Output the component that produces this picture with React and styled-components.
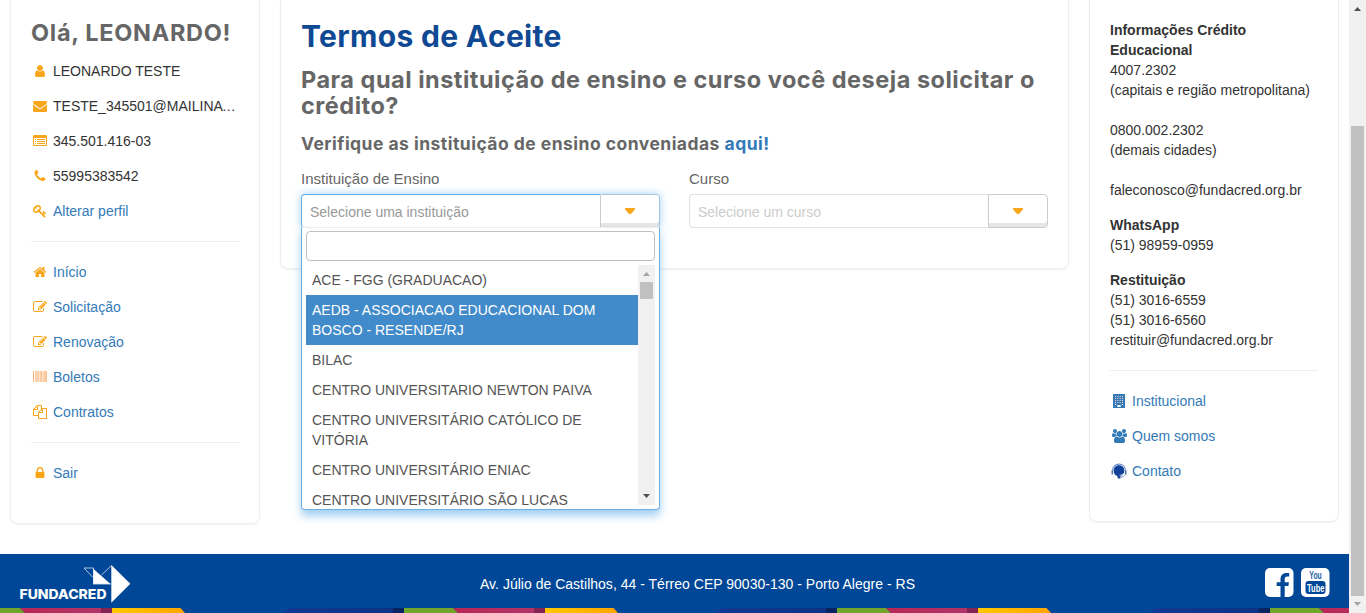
import React from 'react';
import styled, { createGlobalStyle, css } from 'styled-components';

const GlobalStyle = createGlobalStyle`
  *, *::before, *::after { box-sizing: border-box; }
  html, body { margin: 0; height: 100%; overflow: hidden; }
  body {
    background: #fff;
    color: #333;
    font: 14px/20px "Liberation Sans", Arial, sans-serif;
  }
`;

const headingFont = css`
  font-family: Inter, "Open Sans", sans-serif;
  font-weight: 700;
  margin: 0;
  white-space: nowrap;
`;

const Window = styled.div`
  display: flex;
  width: 1366px;
  height: 613px;
  overflow: hidden;
`;

const Page = styled.div`
  display: flex;
  flex-direction: column;
  width: 1349px;
  height: 613px;
`;

const Columns = styled.main`
  display: grid;
  grid-template-columns: 250px 789px 250px;
  column-gap: 20px;
  align-items: start;
  padding-left: 10px;
  height: 554px;
`;

const Card = styled.section`
  height: ${(p) => p.$height}px;
  padding: 20px 20px 0;
  border: 1px solid #eee;
  border-top: 0;
  border-radius: 0 0 8px 8px;
  box-shadow: 0 1px 2px rgba(0, 0, 0, 0.06);
`;

const Greeting = styled.h3`
  ${headingFont}
  color: #666;
  font-size: 23.5px;
  line-height: 26px;
  letter-spacing: ${(p) => p.$spacing}px;
  margin-bottom: 15px;
`;

const Menu = styled.ul`
  display: flex;
  flex-direction: column;
  gap: 15px;
  margin: 0;
  padding: 0;
  list-style: none;
`;

const MenuItem = styled.li`
  display: flex;
  align-items: center;
  gap: 4px;
  height: 20px;
  white-space: nowrap;
  color: ${(p) => (p.$link ? '#337ab7' : '#333')};
`;

const MenuText = styled.span`
  overflow: hidden;
  text-overflow: ellipsis;
`;

const IconBox = styled.span`
  display: flex;
  flex: none;
  justify-content: center;
  width: 18px;
  color: ${(p) => p.$color};
  svg { display: block; overflow: visible; }
`;

const Divider = styled.hr`
  margin: 20px 0;
  border: 0;
  border-top: 1px solid #eee;
`;

const Title = styled.h1`
  ${headingFont}
  color: #0f4893;
  font-size: 30px;
  line-height: 33px;
  letter-spacing: ${(p) => p.$spacing}px;
`;

const Question = styled.h3`
  ${headingFont}
  color: #666;
  font-size: 23.5px;
  line-height: 26px;
  letter-spacing: ${(p) => p.$spacing}px;
  margin-top: 14px;
`;

const Hint = styled.h4`
  ${headingFont}
  color: #666;
  font-size: 17.5px;
  line-height: 20px;
  letter-spacing: ${(p) => p.$spacing}px;
  margin-top: 15px;
  span { color: #337ab7; }
`;

const Fields = styled.div`
  display: grid;
  grid-template-columns: 359px 359px;
  column-gap: 29px;
  width: 747px;
  margin-top: 15px;
`;

const Field = styled.div`
  position: relative;
`;

const Label = styled.label`
  display: block;
  height: 20px;
  margin-bottom: 5px;
  color: #666;
  font-size: 15px;
`;

const Select = styled.div`
  display: flex;
  height: 34px;
  border-radius: 4px;
  box-shadow: ${(p) => (p.$open ? '0 0 8px rgba(102, 175, 233, 0.6)' : 'none')};
`;

const SelectValue = styled.div`
  flex: 1;
  padding: 7px 8px;
  border: 1px solid ${(p) => (p.$open ? '#66afe9' : '#e2e2e2')};
  border-right: 0;
  border-bottom-color: ${(p) => (p.$open ? '#eee' : '#e2e2e2')};
  border-radius: 4px 0 0 4px;
  color: ${(p) => (p.$open ? '#999' : '#ccc')};
`;

const SelectButton = styled.div`
  display: flex;
  justify-content: center;
  width: 60px;
  padding-top: 13px;
  border: 1px solid #ccc;
  border-top-color: ${(p) => (p.$open ? '#adc5d9' : '#ccc')};
  border-right-color: ${(p) => (p.$open ? '#9dc6e6' : '#ccc')};
  border-radius: 0 4px 4px 0;
  box-shadow: inset 0 -4px 0 #e6e6e6;
`;

const Caret = styled.i`
  width: 10px;
  height: 6px;
  background: #faa61a;
  clip-path: polygon(0 0, 100% 0, 100% 20%, 60% 100%, 40% 100%, 0 20%);
`;

const Dropdown = styled.div`
  position: absolute;
  top: 58px;
  left: 0;
  z-index: 2;
  width: 359px;
  height: 283px;
  padding: 4px;
  background: #fff;
  border: 1px solid #66afe9;
  border-top: 1px solid #eee;
  border-radius: 0 0 4px 4px;
  box-shadow: 0 6px 8px rgba(102, 175, 233, 0.6);
`;

const Search = styled.div`
  height: 30px;
  margin: -1px 0 4px;
  border: 1px solid #c0c0c0;
  border-radius: 4px;
`;

const ListArea = styled.div`
  display: flex;
  height: 240px;
`;

const Options = styled.div`
  width: 332px;
  height: 241px;
  overflow: hidden;
`;

const Option = styled.div`
  padding: 5px 6px;
  color: ${(p) => (p.$active ? '#fff' : '#555')};
  background: ${(p) => (p.$active ? '#428bca' : '#fff')};
`;

const Track = styled.div`
  display: flex;
  flex: none;
  flex-direction: column;
  align-items: center;
  width: 17px;
  height: ${(p) => p.$height}px;
  background: #f1f1f1;
`;

const Thumb = styled.div`
  width: 13px;
  height: ${(p) => p.$height}px;
  margin: ${(p) => p.$before}px 0 auto;
  background: #c1c1c1;
`;

const Arrow = styled.i`
  flex: none;
  width: 7px;
  height: 4px;
  margin: ${(p) => (p.$down ? '0 0 7px' : '7px 0 0')};
  background: ${(p) => (p.$dim ? '#a3a3a3' : '#505050')};
  clip-path: ${(p) => (p.$down ? 'polygon(0 0, 100% 0, 50% 100%)' : 'polygon(50% 0, 100% 100%, 0 100%)')};
`;

const Contact = styled.p`
  margin: 0 0 15px;
  white-space: pre-line;
  &:last-of-type { margin-bottom: 0; }
`;

const Footer = styled.footer`
  display: flex;
  flex-direction: column;
  height: 59px;
  background: #004797;
`;

const FooterBar = styled.div`
  display: flex;
  align-items: flex-start;
  justify-content: space-between;
  height: 54px;
  padding: 9px 19px 0 19px;
`;

const Address = styled.address`
  width: 436px;
  margin: 11px 0 0 285px;
  color: #fff;
  font-style: normal;
  letter-spacing: 0.015px;
  white-space: nowrap;
`;

const Social = styled.div`
  display: flex;
  gap: 7px;
  width: 65px;
  margin-top: 5px;
  margin-left: 285px;
`;

const barcodeBars = [[0, 1], [2, 0.6], [3, 0.6], [4.2, 0.6], [5.4, 1], [7, 0.6], [8.2, 1.1], [10, 0.6], [11.2, 0.6], [12.3, 1.5]];

const row = (x, w, y) => `M${x} ${y}h${w}v128h-${w}z`;

const paths = {
  user: 'M1536 1399q0 109-62.5 187t-150.5 78h-854q-88 0-150.5-78t-62.5-187q0-85 8.5-160.5t31.5-152 58.5-131 94-89 134.5-34.5q131 128 313 128t313-128q76 0 134.5 34.5t94 89 58.5 131 31.5 152 8.5 160.5zm-256-887q0 159-112.5 271.5t-271.5 112.5-271.5-112.5-112.5-271.5 112.5-271.5 271.5-112.5 271.5 112.5 112.5 271.5z',
  envelope: 'M1792 710v794q0 66-47 113t-113 47h-1472q-66 0-113-47t-47-113v-794q44 49 101 87 362 246 497 345 57 42 92.5 65.5t94.5 48 110 24.5h2q51 0 110-24.5t94.5-48 92.5-65.5q170-123 498-345 57-39 100-87zm0-294q0 79-49 151t-122 123q-376 261-468 325-10 7-42.5 31t-54 38.5-52 32.5-57.5 27-50 9h-2q-23 0-50-9t-57.5-27-52-32.5-54-38.5-42.5-31q-91-64-262-182.5t-205-142.5q-62-42-117-115.5t-55-136.5q0-78 41.5-130t118.5-52h1472q65 0 112.5 47t47.5 113z',
  list: [1152, 896, 640].map((y) => row(256, 128, y) + row(512, 1024, y)).join('') + 'M1664 1376v-832q0-13-9.5-22.5t-22.5-9.5h-1472q-13 0-22.5 9.5t-9.5 22.5v832q0 13 9.5 22.5t22.5 9.5h1472q13 0 22.5-9.5t9.5-22.5zm128-1088v1088q0 66-47 113t-113 47h-1472q-66 0-113-47t-47-113v-1088q0-66 47-113t113-47h1472q66 0 113 47t47 113z',
  phone: 'M1600 1240q0 27-10 70.5t-21 68.5q-21 50-122 106-94 51-186 51-27 0-53-3.5t-57.5-12.5-47-14.5-55.5-20.5-49-18q-98-35-175-83-127-79-264-216t-216-264q-48-77-83-175-3-9-18-49t-20.5-55.5-14.5-47-12.5-57.5-3.5-53q0-92 51-186 56-101 106-122 25-11 68.5-21t70.5-10q14 0 21 3 18 6 53 76 11 19 30 54t35 63.5 31 53.5q3 4 17.5 25t21.5 35.5 7 28.5q0 20-28.5 50t-62 55-62 53-28.5 46q0 9 5 22.5t8.5 20.5 14 24 11.5 19q76 137 174 235t235 174q2 1 19 11.5t24 14 20.5 8.5 22.5 5q18 0 46-28.5t53-62 55-62 50-28.5q14 0 28.5 7t35.5 21.5 25 17.5q25 15 53.5 31t63.5 35 54 30q70 35 76 53 3 7 3 21z',
  key: 'M832 512q0-80-56-136t-136-56-136 56-56 136q0 42 19 83-41-19-83-19-80 0-136 56t-56 136 56 136 136 56 136-56 56-136q0-42-19-83 41 19 83 19 80 0 136-56t56-136zm851 704q0 17-49 66t-66 49q-9 0-28.5-16t-36.5-33-38.5-40-24.5-26l-96 96 220 220q28 28 28 68 0 42-39 81t-81 39q-40 0-68-28l-671-671q-176 131-365 131-163 0-265.5-102.5t-102.5-265.5q0-160 95-313t248-248 313-95q163 0 265.5 102.5t102.5 265.5q0 189-131 365l355 355 96-96q-3-3-26-24.5t-40-38.5-33-36.5-16-28.5q0-17 49-66t66-49q13 0 23 10 6 6 46 44.5t82 79.5 86.5 86 73 78 28.5 41z',
  home: 'M1472 992v480q0 26-19 45t-45 19h-384v-384h-256v384h-384q-26 0-45-19t-19-45v-480q0-1 .5-3t.5-3l575-474 575 474q1 2 1 6zm223-69l-62 74q-8 9-21 11h-3q-13 0-21-7l-692-577-692 577q-12 8-24 7-13-2-21-11l-62-74q-8-10-7-23.5t11-21.5l719-599q32-26 76-26t76 26l244 204v-195q0-14 9-23t23-9h192q14 0 23 9t9 23v408l219 182q10 8 11 21.5t-7 23.5z',
  edit: 'M888 1184l116-116-152-152-116 116v56h96v96h56zm440-720q-16-16-33 1l-350 350q-17 17-1 33t33-1l350-350q17-17 1-33zm80 594v190q0 119-84.5 203.5t-203.5 84.5h-832q-119 0-203.5-84.5t-84.5-203.5v-832q0-119 84.5-203.5t203.5-84.5h832q63 0 117 25 15 7 18 23 3 17-9 29l-49 49q-14 14-32 8-23-6-45-6h-832q-66 0-113 47t-47 113v832q0 66 47 113t113 47h832q66 0 113-47t47-113v-126q0-13 9-22l64-64q15-15 35-7t20 29zm-96-738l288 288-672 672h-288v-288zm444 132l-92 92-288-288 92-92q28-28 68-28t68 28l152 152q28 28 28 68t-28 68z',
  files: 'M1696 384q40 0 68 28t28 68v1216q0 40-28 68t-68 28h-960q-40 0-68-28t-28-68v-288h-544q-40 0-68-28t-28-68v-672q0-40 20-88t48-76l408-408q28-28 76-48t88-20h416q40 0 68 28t28 68v328q68-40 128-40h416zm-544 213l-299 299h299v-299zm-640-384l-299 299h299v-299zm196 647l316-316v-416h-384v416q0 40-28 68t-68 28h-416v640h512v-256q0-40 20-88t48-76zm956 804v-1152h-384v416q0 40-28 68t-68 28h-416v640h896z',
  lock: 'M640 768h512v-192q0-106-75-181t-181-75-181 75-75 181v192zm832 96v576q0 40-28 68t-68 28h-960q-40 0-68-28t-28-68v-576q0-40 28-68t68-28h32v-192q0-184 132-316t316-132 316 132 132 316v192h32q40 0 68 28t28 68z',
  users: 'M657 896q-162 5-265 128h-134q-82 0-138-40.5t-56-118.5q0-353 124-353 6 0 43.5 21t97.5 42.5 119 21.5q67 0 133-23-5 37-5 66 0 159 90 256zm1071 637q0 120-73 189.5t-194 69.5h-874q-121 0-194-69.5t-73-189.5q0-53 3.5-103.5t14-109 26.5-108.5 43-97.5 62-81 85.5-53.5 111.5-20q10 0 43 21.5t73 48 107 48 135 21.5 135-21.5 107-48 73-48 43-21.5q61 0 111.5 20t85.5 53.5 62 81 43 97.5 26.5 108.5 14 109 3.5 103.5zm-1024-1277q0 106-75 181t-181 75-181-75-75-181 75-181 181-75 181 75 75 181zm704 384q0 159-112.5 271.5t-271.5 112.5-271.5-112.5-112.5-271.5 112.5-271.5 271.5-112.5 271.5 112.5 112.5 271.5zm576 225q0 78-56 118.5t-138 40.5h-134q-103-123-265-128 90-97 90-256 0-29-5-66 66 23 133 23 59 0 119-21.5t97.5-42.5 43.5-21q124 0 124 353zm-128-609q0 106-75 181t-181 75-181-75-75-181 75-181 181-75 181 75 75 181z',
};

function Glyph({ name }) {
  if (name === 'barcode') {
    return (
      <svg width="14" height="14" viewBox="0 0 14 14" fill="#f9a55c" opacity=".85">
        {barcodeBars.map(([x, w]) => <rect key={x} x={x} y="1" width={w} height="11" />)}
      </svg>
    );
  }
  if (name === 'building') {
    return (
      <svg width="14" height="14" viewBox="0 0 14 14">
        <rect x="1" y="0" width="12" height="14" rx=".5" fill="currentColor" />
        {[2, 4, 6, 8].map((y) => [3, 5.3, 7.6, 9.9].map((x) => <rect key={`${x}-${y}`} x={x} y={y} width="1.1" height="1" fill="#f3cfcf" />))}
        <path d="M3 10h1.1v1H3zM9.9 10H11v1H9.9zM5.3 11h3.4v2H5.3z" fill="#fff" />
      </svg>
    );
  }
  if (name === 'headset') {
    return (
      <svg width="16" height="16" viewBox="0 0 16 16" fill="none">
        <path d="M1.600 7.500C1.600 3.500 4.300 1.100 8 1.100s6.400 2.400 6.400 6.400" stroke="#6f8fc3" strokeWidth="1.100" />
        <path d="M8 2.300c3.300 0 5.300 2.300 5.300 5.500 0 3-2 5.500-5.300 5.500s-5.300-2.500-5.300-5.500c0-3.200 2-5.500 5.300-5.500z" fill="#12419a" />
        <path d="M.5 7.200h1.600v4.300H.5zM13.900 7.200h1.600v4.300h-1.600z" fill="#4c74b5" />
        <path d="M8.500 12.300c1.500 0 3-.5 4.200-1.800" stroke="#fff" strokeWidth=".8" />
        <path d="M14.300 11.500c-.8 1.800-2.600 2.600-5 2.700" stroke="#6f8fc3" strokeWidth=".9" />
        <rect x="6.500" y="12.800" width="3" height="2.600" rx="1" fill="#12419a" />
      </svg>
    );
  }
  const wide = name === 'users';
  return (
    <svg width={wide ? 15 : 14} height="14" viewBox={wide ? '64 0 1920 1792' : '0 0 1792 1792'} fill="currentColor">
      <path d={paths[name]} fillRule={name === 'list' ? 'evenodd' : 'nonzero'} />
    </svg>
  );
}

function Item({ icon, link, color = '#faa61a', children }) {
  return (
    <MenuItem $link={link}>
      <IconBox $color={color}><Glyph name={icon} /></IconBox>
      <MenuText>{children}</MenuText>
    </MenuItem>
  );
}

function Logo() {
  return (
    <svg width="112" height="42" viewBox="19 563 112 42">
      <path d="M111.300 565l19 18.800-19 19z" fill="#fff" />
      <path d="M93 568.500l17.500 15.500H93z" fill="#fff" />
      <path d="M93 577.500l-9-9.500h9.500v16M93 584h18M101.500 575l10-9.500" fill="none" stroke="#dce6f2" strokeWidth=".8" />
      <text x="19.500" y="599" fill="#fff" fontFamily="Inter, sans-serif" fontWeight="800" fontSize="13.500" textLength="87" lengthAdjust="spacingAndGlyphs">FUNDACRED</text>
    </svg>
  );
}

function Facebook() {
  return (
    <svg width="29" height="29" viewBox="0 0 29 29">
      <rect width="28.500" height="29" rx="5" fill="#fff" />
      <path d="M15.500 29V18h-3.800v-3.700h3.800v-3c0-4 2.300-6.300 6-6.300h2.700v3.600h-2c-1.900 0-2.500.9-2.500 2.600v3.100h4.200l-.5 3.700h-3.700v11z" fill="#004797" />
    </svg>
  );
}

function YouTube() {
  return (
    <svg width="29" height="29" viewBox="0 0 29 29">
      <rect width="28.500" height="29" rx="5" fill="#fff" />
      <rect x="4.500" y="13" width="20" height="13" rx="3" fill="#004797" />
      <g fontFamily="Liberation Sans Narrow, Liberation Sans, sans-serif" fontWeight="700">
        <text x="8.300" y="11.300" fontSize="11" fill="#1d61a8" textLength="12.500" lengthAdjust="spacingAndGlyphs">You</text>
        <text x="6" y="23.600" fontSize="11.500" fill="#fff" textLength="17.500" lengthAdjust="spacingAndGlyphs">Tube</text>
      </g>
    </svg>
  );
}

function ColorStrip() {
  return (
    <svg width="1349" height="5" viewBox="0 0 1349 5">
      <defs>
        <linearGradient id="pink"><stop stopColor="#b92655" /><stop offset="1" stopColor="#b23568" /></linearGradient>
        <linearGradient id="yellow"><stop stopColor="#ffc800" /><stop offset="1" stopColor="#fda400" /></linearGradient>
        <linearGradient id="navy"><stop stopColor="#103993" /><stop offset="1" stopColor="#0d3285" /></linearGradient>
      </defs>
      {[-29, 404, 837, 1270].map((x) => (
        <g key={x} transform={`translate(${x} 0)`}>
          <path d="M0 0h49l5 5H0z" fill="#72a52b" />
          <path d="M49 0h81v5H54z" fill="url(#pink)" />
          <path d="M130 0h11v5h-11z" fill="#852452" />
          <path d="M141 0h68.500l4.500 5h-73z" fill="url(#yellow)" />
          <path d="M317.500 0H422v5H313z" fill="url(#navy)" />
          <path d="M422 0h11v5h-11z" fill="#072461" />
        </g>
      ))}
    </svg>
  );
}

const institutions = [
  'ACE - FGG (GRADUACAO)',
  'AEDB - ASSOCIACAO EDUCACIONAL DOM BOSCO - RESENDE/RJ',
  'BILAC',
  'CENTRO UNIVERSITARIO NEWTON PAIVA',
  'CENTRO UNIVERSITÁRIO CATÓLICO DE VITÓRIA',
  'CENTRO UNIVERSITÁRIO ENIAC',
  'CENTRO UNIVERSITÁRIO SÃO LUCAS',
];

export default function App() {
  return (
    <Window>
      <GlobalStyle />
      <Page>
        <Columns>
          <Card as="aside" $height={524}>
            <Greeting $spacing={0.7}>Olá, LEONARDO!</Greeting>
            <Menu>
              <Item icon="user">LEONARDO TESTE</Item>
              <Item icon="envelope">TESTE_345501@MAILINATOR.COM</Item>
              <Item icon="list">345.501.416-03</Item>
              <Item icon="phone">55995383542</Item>
              <Item icon="key" link>Alterar perfil</Item>
            </Menu>
            <Divider />
            <Menu>
              <Item icon="home" link>Início</Item>
              <Item icon="edit" link>Solicitação</Item>
              <Item icon="edit" link>Renovação</Item>
              <Item icon="barcode" link>Boletos</Item>
              <Item icon="files" link>Contratos</Item>
            </Menu>
            <Divider />
            <Menu>
              <Item icon="lock" link>Sair</Item>
            </Menu>
          </Card>

          <Card $height={269}>
            <Title $spacing={0.33}>Termos de Aceite</Title>
            <Question $spacing={0.51}>Para qual instituição de ensino e curso você deseja solicitar o<br />crédito?</Question>
            <Hint $spacing={0.47}>Verifique as instituição de ensino conveniadas <span>aqui!</span></Hint>
            <Fields>
              <Field>
                <Label>Instituição de Ensino</Label>
                <Select $open>
                  <SelectValue $open>Selecione uma instituição</SelectValue>
                  <SelectButton $open><Caret /></SelectButton>
                </Select>
                <Dropdown>
                  <Search />
                  <ListArea>
                    <Options>
                      {institutions.map((name, i) => <Option key={name} $active={i === 1}>{name}</Option>)}
                    </Options>
                    <Track $height={240}>
                      <Arrow $dim />
                      <Thumb $before={6} $height={17} />
                      <Arrow $down />
                    </Track>
                  </ListArea>
                </Dropdown>
              </Field>
              <Field>
                <Label>Curso</Label>
                <Select>
                  <SelectValue>Selecione um curso</SelectValue>
                  <SelectButton><Caret /></SelectButton>
                </Select>
              </Field>
            </Fields>
          </Card>

          <Card as="aside" $height={522}>
            <Contact>
              <b>Informações Crédito<br />Educacional</b><br />
              4007.2302<br />(capitais e região metropolitana)<br /><br />
              0800.002.2302<br />(demais cidades)<br /><br />
              faleconosco@fundacred.org.br
            </Contact>
            <Contact><b>WhatsApp</b><br />(51) 98959-0959</Contact>
            <Contact><b>Restituição</b><br />(51) 3016-6559<br />(51) 3016-6560<br />restituir@fundacred.org.br</Contact>
            <Divider />
            <Menu>
              <Item icon="building" color="#337ab7" link>Institucional</Item>
              <Item icon="users" color="#337ab7" link>Quem somos</Item>
              <Item icon="headset" color="#337ab7" link>Contato</Item>
            </Menu>
          </Card>
        </Columns>
        <Footer>
          <FooterBar>
            <Logo />
            <Address>Av. Júlio de Castilhos, 44 - Térreo CEP 90030-130 - Porto Alegre - RS</Address>
            <Social><Facebook /><YouTube /></Social>
          </FooterBar>
          <ColorStrip />
        </Footer>
      </Page>
      <Track $height={613}>
        <Arrow />
        <Thumb $before={115} $height={470} />
        <Arrow $down $dim />
      </Track>
    </Window>
  );
}
